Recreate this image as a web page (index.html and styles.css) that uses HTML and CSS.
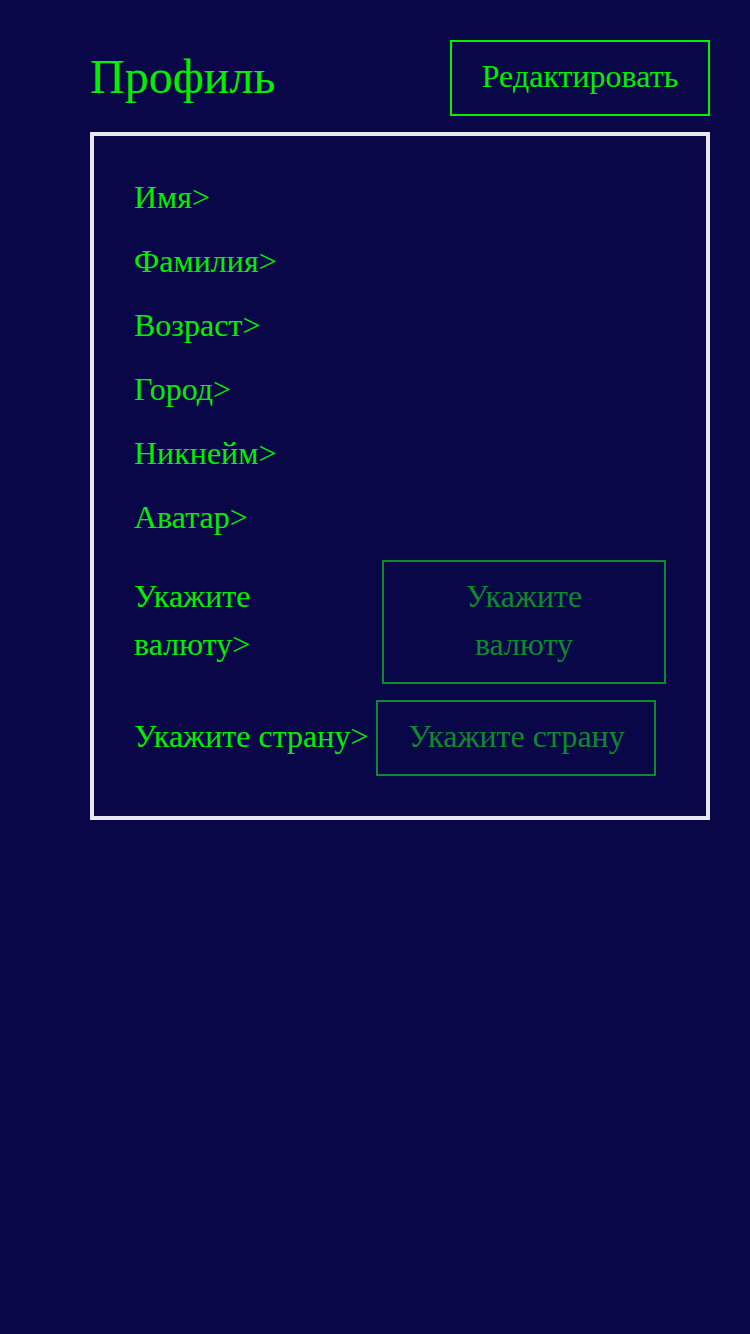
FILE: index.html
```html
<!DOCTYPE html>
<html lang="ru">
<head>
<meta charset="utf-8">
<title>Профиль</title>
<link rel="stylesheet" href="styles.css">
</head>
<body>
<div class="page">
  <header class="header">
    <h1 class="title">Профиль</h1>
    <button class="edit-btn">Редактировать</button>
  </header>
  <section class="card">
    <div class="row">Имя&gt;</div>
    <div class="row">Фамилия&gt;</div>
    <div class="row">Возраст&gt;</div>
    <div class="row">Город&gt;</div>
    <div class="row">Никнейм&gt;</div>
    <div class="row">Аватар&gt;</div>
    <div class="field field-currency">
      <span class="field-label label-currency">Укажите валюту&gt;</span>
      <div class="field-input input-currency">Укажите валюту</div>
    </div>
    <div class="field field-country">
      <span class="field-label">Укажите страну&gt;</span>
      <div class="field-input input-country">Укажите страну</div>
    </div>
  </section>
</div>
</body>
</html>
```
FILE: styles.css
```css
html, body {
  margin: 0;
  padding: 0;
  background: #0a0748;
}
body {
  font-family: "Liberation Serif", "Times New Roman", serif;
  color: #00f000;
  min-height: 1334px;
}
.page {
  padding: 40px 40px 0 90px;
}
.header {
  display: flex;
  justify-content: space-between;
  align-items: center;
}
.title {
  margin: 0;
  padding-bottom: 3px;
  font-size: 48px;
  font-weight: normal;
  line-height: 56px;
  color: #00f000;
}
.edit-btn {
  width: 260px;
  height: 76px;
  background: transparent;
  border: 2px solid #00f000;
  color: #00f000;
  font-family: "Liberation Serif", "Times New Roman", serif;
  font-size: 32px;
  padding: 0 0 3px 0;
}
.card {
  margin-top: 16px;
  border: 4px solid #e8e8ee;
  padding: 37px 40px 40px 40px;
  display: flex;
  flex-direction: column;
  gap: 16px;
  font-size: 32px;
  line-height: 48px;
}
.field {
  display: flex;
  align-items: center;
}
.field-currency {
  margin-top: 3px;
}
.field-label {
  padding-bottom: 4px;
}
.label-currency {
  width: 248px;
  padding-right: 30px;
  box-sizing: border-box;
}
.field-input {
  border: 2px solid #0c8a2c;
  color: #0c8a2c;
  text-align: center;
  padding: 10px 0 14px 0;
}
.input-currency {
  width: 284px;
  padding: 10px 40px 14px 40px;
  box-sizing: border-box;
}
.input-country {
  width: 276px;
  margin-left: 8px;
}
```
